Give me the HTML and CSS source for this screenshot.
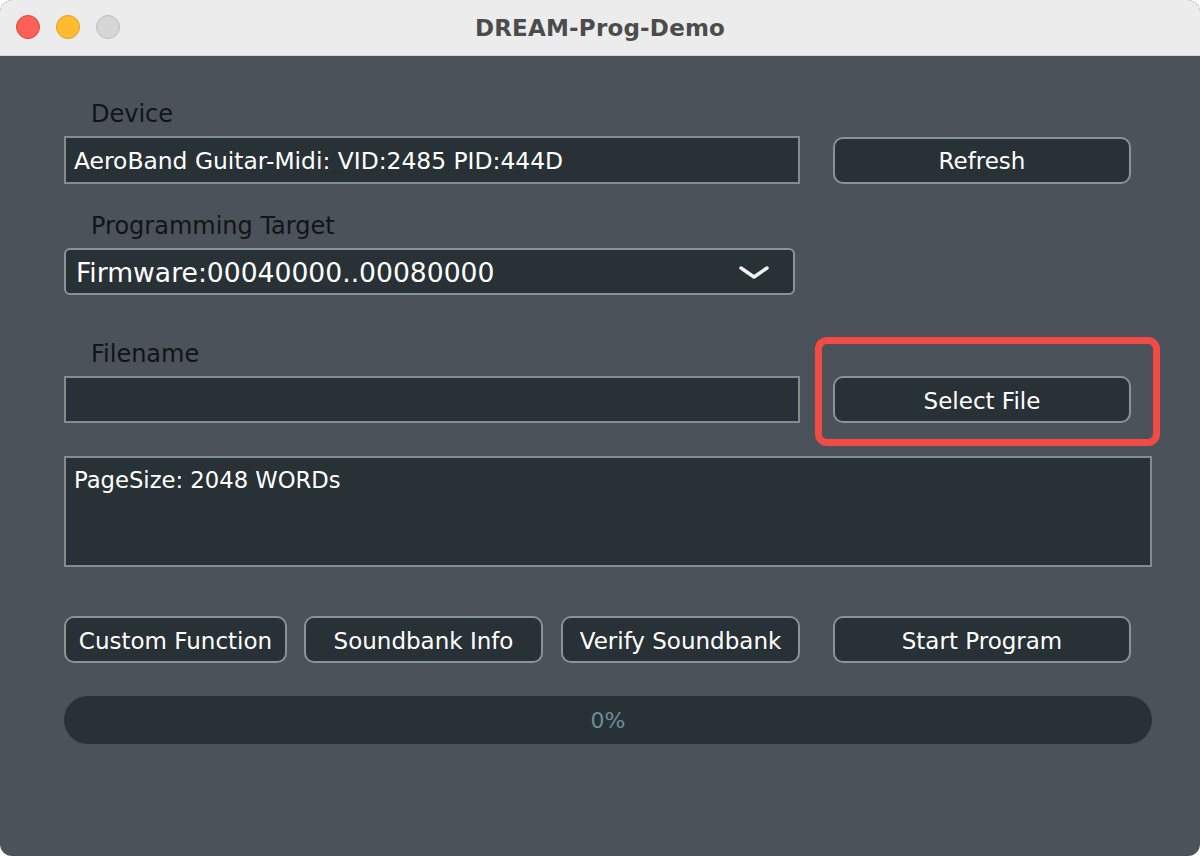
FILE: index.html
```html
<!DOCTYPE html>
<html lang="en">
<head>
  <meta charset="UTF-8">
  <title>DREAM-Prog-Demo</title>
  <link rel="stylesheet" href="styles.css">
</head>
<body>
  <div class="window">
    <div class="titlebar">
      <div class="lights">
        <span class="light red"></span>
        <span class="light yellow"></span>
        <span class="light grey"></span>
      </div>
      <div class="title">DREAM-Prog-Demo</div>
    </div>

    <div class="panel">
      <div class="label first">Device</div>
      <div class="row">
        <div class="field">AeroBand Guitar-Midi: VID:2485 PID:444D</div>
        <button class="btn">Refresh</button>
      </div>

      <div class="label">Programming Target</div>
      <div class="row">
        <div class="combo">
          <span>Firmware:00040000..00080000</span>
          <svg class="chevron" width="30" height="14" viewBox="0 0 30 14">
            <path d="M2 2 L15 11 L28 2" fill="none" stroke="#f2f2f2" stroke-width="3.5" stroke-linecap="round" stroke-linejoin="round"/>
          </svg>
        </div>
      </div>

      <div class="label filename">Filename</div>
      <div class="row">
        <div class="field empty"></div>
        <div class="btn-wrap">
          <button class="btn">Select File</button>
          <div class="highlight"></div>
        </div>
      </div>

      <div class="log">PageSize: 2048 WORDs</div>

      <div class="actions">
        <button class="btn w1">Custom Function</button>
        <button class="btn w2">Soundbank Info</button>
        <button class="btn w3">Verify Soundbank</button>
        <button class="btn">Start Program</button>
      </div>

      <div class="progress">0%</div>
    </div>
  </div>
</body>
</html>
```

FILE: styles.css
```css
html, body {
  margin: 0;
  padding: 0;
  background: #ffffff;
}
body {
  font-family: "DejaVu Sans", "Liberation Sans", sans-serif;
  width: 1200px;
  height: 856px;
  overflow: hidden;
}
.window {
  width: 1200px;
  height: 856px;
  border-radius: 12px;
  overflow: hidden;
  background: #4b5259;
  display: flex;
  flex-direction: column;
}
.titlebar {
  height: 56px;
  background: #ececec;
  border-bottom: 1px solid #d6d6d6;
  box-sizing: border-box;
  display: flex;
  align-items: center;
  justify-content: center;
  position: relative;
}
.lights {
  position: absolute;
  left: 16px;
  top: 15px;
  display: flex;
  gap: 16px;
}
.light {
  width: 24px;
  height: 24px;
  border-radius: 50%;
  box-sizing: border-box;
}
.light.red { background: #fe5f57; border: 1px solid #e0443e; }
.light.yellow { background: #febc2e; border: 1px solid #dea123; }
.light.grey { background: #d6d6d6; border: 1px solid #bdbdbd; }
.title {
  font-size: 23px;
  font-weight: bold;
  color: #4c4c4c;
  letter-spacing: 0.2px;
}
.panel {
  padding: 0 48px 0 64px;
  display: flex;
  flex-direction: column;
}
.label {
  margin: 26px 0 8px 27px;
  height: 30px;
  line-height: 32px;
  font-size: 24px;
  color: #121416;
}
.label.first { margin-top: 42px; }
.label.filename { margin-top: 43px; }
.row {
  display: flex;
  gap: 33px;
  align-items: center;
}
.field {
  width: 736px;
  height: 48px;
  box-sizing: border-box;
  border: 2px solid #868b8c;
  background: #283136;
  color: #ffffff;
  font-size: 23.4px;
  padding: 0 8px;
  line-height: 46px;
  white-space: nowrap;
}
.field.empty { height: 47px; }
.btn {
  width: 298px;
  height: 47px;
  box-sizing: border-box;
  border: 2px solid #8a9494;
  border-radius: 10px;
  background: #283136;
  color: #ffffff;
  font-family: inherit;
  font-size: 23px;
  padding: 2px 0 0;
}
.btn-wrap {
  position: relative;
  display: flex;
}
.highlight {
  position: absolute;
  left: -18px;
  top: -39px;
  width: 345px;
  height: 109px;
  box-sizing: border-box;
  border: 7px solid #f24b46;
  border-radius: 12px;
}
.combo {
  width: 731px;
  height: 47px;
  box-sizing: border-box;
  border: 2px solid #8a9494;
  border-radius: 6px;
  background: #283136;
  color: #ffffff;
  font-size: 26.6px;
  display: flex;
  align-items: center;
  justify-content: space-between;
  padding: 2px 24px 0 10px;
}
.log {
  margin-top: 33px;
  width: 1088px;
  height: 111px;
  box-sizing: border-box;
  border: 2px solid #868b8c;
  background: #283136;
  color: #ffffff;
  font-size: 22.7px;
  padding: 9px 8px;
}
.actions {
  margin-top: 49px;
  display: flex;
  align-items: center;
}
.w1 { width: 223px; margin-right: 17px; }
.w2 { width: 239px; margin-right: 18px; }
.w3 { width: 239px; margin-right: 33px; }
.progress {
  margin-top: 33px;
  width: 1088px;
  height: 48px;
  border-radius: 24px;
  background: #283136;
  color: #6e8c9a;
  font-size: 22px;
  line-height: 50px;
  text-align: center;
}
```
